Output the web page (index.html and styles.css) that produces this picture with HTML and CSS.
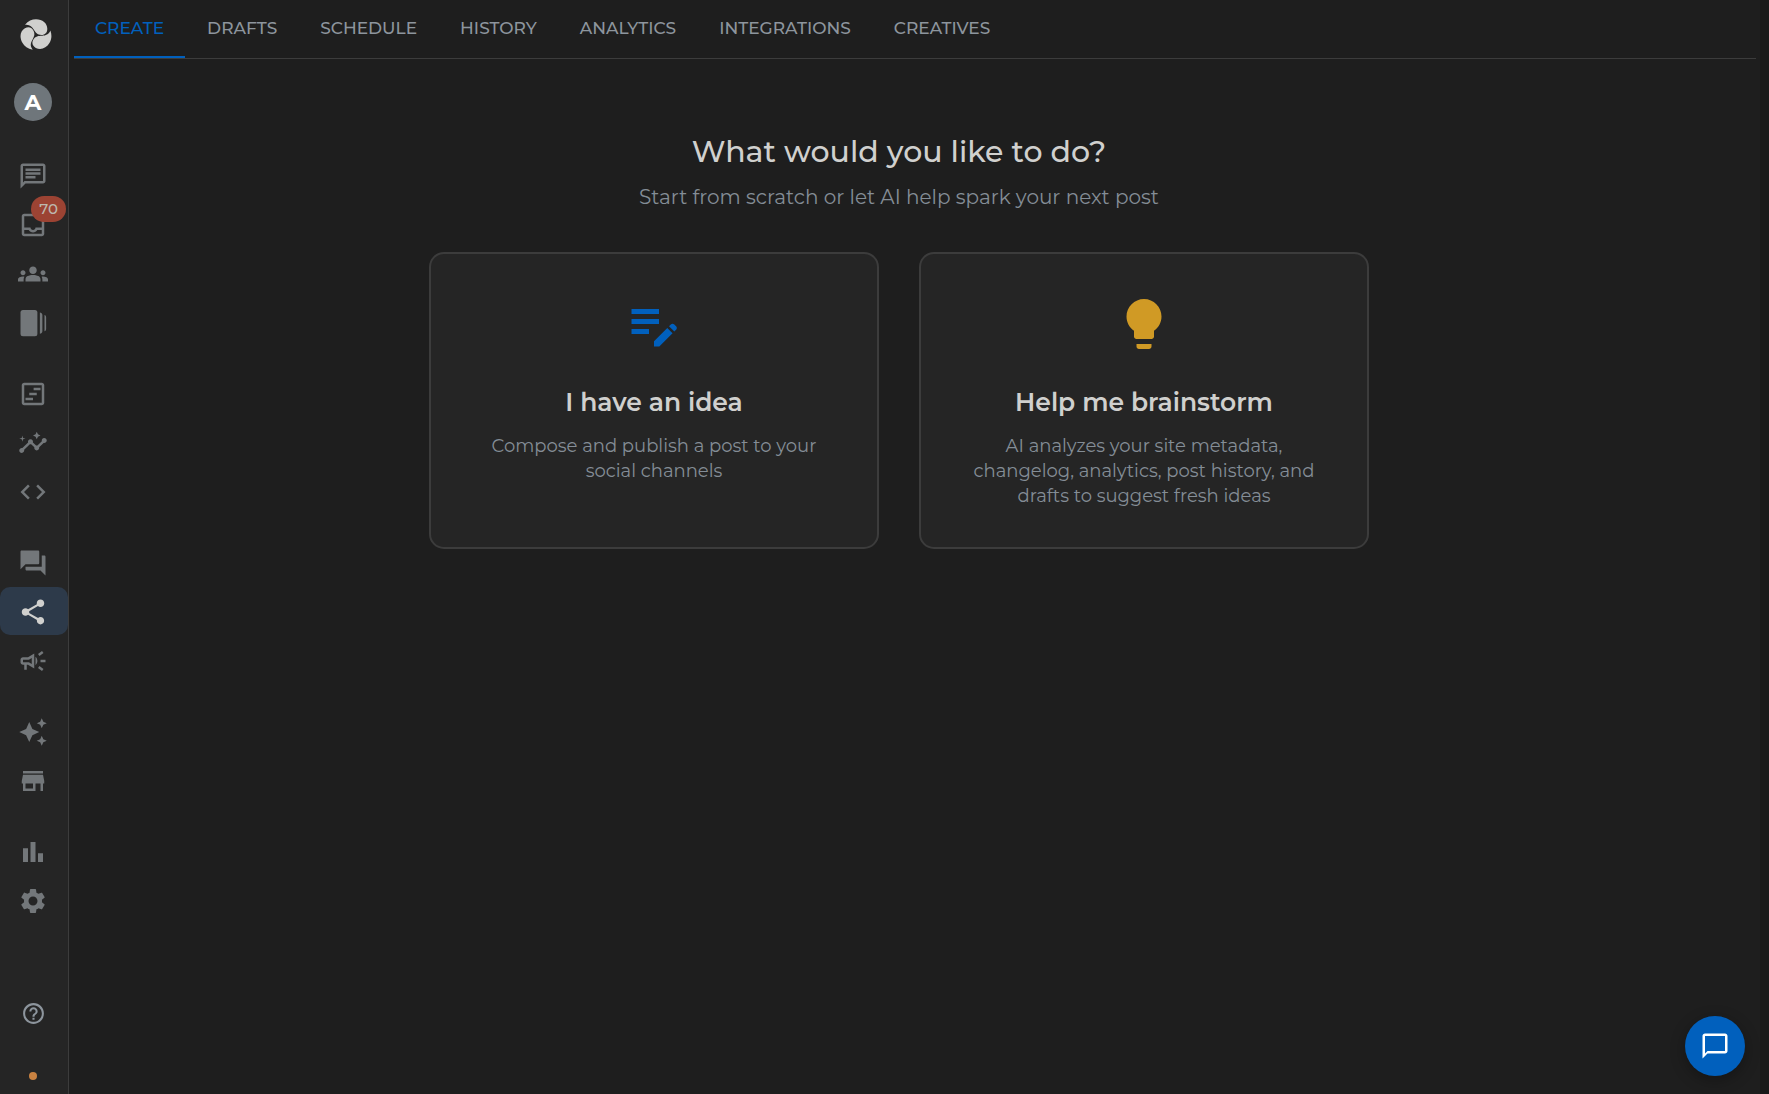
FILE: index.html
```html
<!DOCTYPE html>
<html lang="en">
<head>
    <meta charset="UTF-8">
    <meta name="viewport" content="width=device-width, initial-scale=1.0">
    <title>Create</title>
    <link rel="stylesheet" href="styles.css">
</head>
<body>
    <aside class="sidebar">
        <a href="#" class="logo" aria-label="Home">
            <svg viewBox="0 0 32 32">
                <path d="M5 5.8C8 2 12 .3 16 .3c6.500 0 11.300 4 11.300 9.400 0 3.900-2.300 6.300-5.800 6.300-4.300 0-6-2.500-7.800-5.400C12 7.500 9.500 5 5 5.800z"/>
                <path transform="rotate(120 16 16)" d="M5 5.8C8 2 12 .3 16 .3c6.500 0 11.300 4 11.300 9.400 0 3.900-2.300 6.300-5.800 6.300-4.300 0-6-2.500-7.800-5.400C12 7.500 9.500 5 5 5.800z"/>
                <path transform="rotate(240 16 16)" d="M5 5.8C8 2 12 .3 16 .3c6.500 0 11.300 4 11.300 9.400 0 3.900-2.300 6.300-5.800 6.300-4.300 0-6-2.500-7.800-5.400C12 7.500 9.500 5 5 5.800z"/>
            </svg>
        </a>
        <button class="avatar">A</button>

        <nav class="side-nav">
            <div class="side-group">
                <a href="#" class="side-item" aria-label="Chat">
                    <svg viewBox="0 0 24 24"><path d="M4 4h16v12H5.170L4 17.170V4m0-2c-1.100 0-1.990.9-1.990 2L2 22l4-4h14c1.100 0 2-.9 2-2V4c0-1.100-.9-2-2-2H4zm2 10h8v2H6v-2zm0-3h12v2H6V9zm0-3h12v2H6V6z"/></svg>
                </a>
                <a href="#" class="side-item" aria-label="Inbox">
                    <svg viewBox="0 0 24 24"><path d="M19 3H5c-1.100 0-2 .9-2 2v14c0 1.100.9 2 2 2h14c1.100 0 2-.9 2-2V5c0-1.100-.9-2-2-2zm0 16H5v-3h3.560c.69 1.190 1.970 2 3.450 2s2.750-.81 3.450-2H19v3zm0-5h-4.990c0 1.100-.9 2-2 2s-2-.9-2-2H5V5h14v9z"/></svg>
                    <span class="badge">70</span>
                </a>
                <a href="#" class="side-item" aria-label="Contacts">
                    <svg viewBox="0 0 24 24"><path d="M12 12.750c1.630 0 3.070.39 4.240.9 1.080.48 1.760 1.560 1.760 2.730V18H6v-1.610c0-1.180.68-2.260 1.760-2.730 1.170-.52 2.610-.91 4.240-.91zM4 13c1.100 0 2-.9 2-2s-.9-2-2-2-2 .9-2 2 .9 2 2 2zm1.130 1.100c-.37-.06-.74-.1-1.130-.1-.99 0-1.930.21-2.780.58C.48 14.900 0 15.620 0 16.430V18h4.500v-1.610c0-.83.23-1.610.63-2.290zM20 13c1.100 0 2-.9 2-2s-.9-2-2-2-2 .9-2 2 .9 2 2 2zm4 3.430c0-.81-.48-1.530-1.220-1.850-.85-.37-1.790-.58-2.780-.58-.39 0-.76.04-1.130.1.4.68.63 1.460.63 2.290V18H24v-1.570zM12 6c1.660 0 3 1.340 3 3s-1.340 3-3 3-3-1.340-3-3 1.340-3 3-3z"/></svg>
                </a>
                <a href="#" class="side-item" aria-label="Stories">
                    <svg viewBox="0 0 24 24"><rect x="2" y="1.500" width="13.500" height="21" rx="2"/><path d="M17.500 3.500c1.100.2 2 .9 2 2v13c0 1.100-.9 1.800-2 2zM21.200 5.500c.8.300 1.300.9 1.300 1.800v9.400c0 .9-.5 1.500-1.300 1.800z"/></svg>
                </a>
            </div>
            <div class="side-group">
                <a href="#" class="side-item" aria-label="Changelog">
                    <svg viewBox="0 0 24 24"><path fill-rule="evenodd" d="M5 3h14c1.100 0 2 .9 2 2v14c0 1.100-.9 2-2 2H5c-1.100 0-2-.9-2-2V5c0-1.100.9-2 2-2zm0 2v14h14V5zm7.500 2h5.500v2h-5.500zM9 11h6v2H9zm-3 4h6v2H6z"/></svg>
                </a>
                <a href="#" class="side-item" aria-label="Insights">
                    <svg viewBox="0 0 24 24"><path d="M21 8c-1.450 0-2.260 1.440-1.930 2.510l-3.550 3.560c-.3-.09-.74-.09-1.040 0l-2.550-2.550C12.270 10.450 11.460 9 10 9c-1.450 0-2.270 1.440-1.930 2.520l-4.560 4.550C2.440 15.740 1 16.550 1 18c0 1.100.9 2 2 2 1.450 0 2.260-1.440 1.930-2.510l4.550-4.560c.3.09.74.09 1.040 0l2.550 2.550C12.730 16.550 13.540 18 15 18c1.450 0 2.270-1.440 1.930-2.520l3.560-3.550c1.070.33 2.510-.48 2.510-1.930 0-1.100-.9-2-2-2zM15 9l.94-2.070L18 6l-2.060-.93L15 3l-.92 2.070L12 6l2.080.93zM3.500 11L4 9l2-.5L4 8l-.5-2L3 8l-2 .5L3 9z"/></svg>
                </a>
                <a href="#" class="side-item" aria-label="Code">
                    <svg viewBox="0 0 24 24"><path d="M9.400 16.600L4.800 12l4.600-4.600L8 6l-6 6 6 6 1.400-1.400zm5.200 0l4.600-4.600-4.600-4.600L16 6l6 6-6 6-1.400-1.400z"/></svg>
                </a>
            </div>
            <div class="side-group">
                <a href="#" class="side-item" aria-label="Forum">
                    <svg viewBox="0 0 24 24"><path d="M21 6h-2v9H6v2c0 .55.45 1 1 1h11l4 4V7c0-.55-.45-1-1-1zm-4 6V3c0-.55-.45-1-1-1H3c-.55 0-1 .45-1 1v14l4-4h10c.55 0 1-.45 1-1z"/></svg>
                </a>
                <a href="#" class="side-item active" aria-label="Social">
                    <svg viewBox="0 0 24 24"><path d="M18 16.080c-.76 0-1.440.3-1.960.77L8.910 12.700c.05-.23.09-.46.09-.7s-.04-.47-.09-.7l7.050-4.110c.54.5 1.250.81 2.040.81 1.660 0 3-1.340 3-3s-1.340-3-3-3-3 1.340-3 3c0 .24.04.47.09.7L8.040 9.810C7.500 9.310 6.790 9 6 9c-1.660 0-3 1.340-3 3s1.340 3 3 3c.79 0 1.500-.31 2.040-.81l7.120 4.160c-.05.21-.08.43-.08.65 0 1.610 1.310 2.920 2.920 2.920s2.920-1.310 2.920-2.920-1.310-2.920-2.920-2.920z"/></svg>
                </a>
                <a href="#" class="side-item" aria-label="Campaigns">
                    <svg viewBox="0 0 24 24"><path d="M18 11v2h4v-2h-4zM16 17.610c.96.71 2.210 1.650 3.200 2.390.4-.53.8-1.070 1.200-1.600-.99-.74-2.240-1.680-3.200-2.400-.4.54-.8 1.080-1.200 1.610zM20.400 5.600C20 5.070 19.600 4.530 19.200 4c-.99.74-2.240 1.680-3.200 2.400.4.53.8 1.070 1.200 1.600.96-.72 2.210-1.650 3.200-2.400zM4 9c-1.100 0-2 .9-2 2v2c0 1.100.9 2 2 2h1v4h2v-4h1l5 3V6L8 9H4zm5.030 1.710L11 9.530v4.940l-1.970-1.180-.48-.29H4v-2h4.550l.48-.29zM15.500 12c0-1.330-.58-2.530-1.500-3.350v6.690c.92-.81 1.500-2.010 1.500-3.340z"/></svg>
                </a>
            </div>
            <div class="side-group">
                <a href="#" class="side-item" aria-label="AI">
                    <svg viewBox="0 0 24 24"><path d="M19 9l1.250-2.750L23 5l-2.750-1.250L19 1l-1.250 2.750L15 5l2.750 1.250L19 9zm-7.500.5L9 4 6.500 9.500 1 12l5.500 2.500L9 20l2.500-5.500L17 12l-5.500-2.500zM19 15l-1.250 2.750L15 19l2.750 1.250L19 23l1.250-2.750L23 19l-2.750-1.250L19 15z"/></svg>
                </a>
                <a href="#" class="side-item" aria-label="Store">
                    <svg viewBox="0 0 24 24"><path d="M20 4H4v2h16V4zm1 10v-2l-1-5H4l-1 5v2h1v6h10v-6h4v6h2v-6h1zm-9 4H6v-4h6v4z"/></svg>
                </a>
            </div>
            <div class="side-group">
                <a href="#" class="side-item" aria-label="Reports">
                    <svg viewBox="0 0 24 24"><path d="M4 9h4v11H4zm12 4h4v7h-4zm-6-9h4v16h-4z"/></svg>
                </a>
                <a href="#" class="side-item" aria-label="Settings">
                    <svg viewBox="0 0 24 24"><path d="M19.140 12.940c.04-.3.06-.61.06-.94 0-.32-.02-.64-.07-.94l2.030-1.580c.18-.14.23-.41.12-.61l-1.920-3.320c-.12-.22-.37-.29-.59-.22l-2.390.96c-.5-.38-1.030-.7-1.620-.94l-.36-2.540c-.04-.24-.24-.41-.48-.41h-3.840c-.24 0-.43.17-.47.41l-.36 2.540c-.59.24-1.130.57-1.620.94l-2.390-.96c-.22-.08-.47 0-.59.22L2.740 8.870c-.12.21-.08.47.12.61l2.030 1.580c-.05.3-.09.63-.09.94s.02.64.07.94l-2.030 1.580c-.18.14-.23.41-.12.61l1.920 3.320c.12.22.37.29.59.22l2.390-.96c.5.38 1.030.7 1.620.94l.36 2.540c.05.24.24.41.48.41h3.840c.24 0 .44-.17.47-.41l.36-2.540c.59-.24 1.130-.56 1.620-.94l2.390.96c.22.08.47 0 .59-.22l1.920-3.320c.12-.22.07-.47-.12-.61l-2.010-1.580zM12 15.600c-1.980 0-3.600-1.620-3.600-3.600s1.620-3.600 3.600-3.600 3.600 1.620 3.600 3.600-1.620 3.600-3.600 3.600z"/></svg>
                </a>
            </div>
        </nav>

        <div class="side-footer">
            <a href="#" class="side-item help" aria-label="Help">
                <svg viewBox="0 0 24 24"><path d="M11 18h2v-2h-2v2zm1-16C6.480 2 2 6.480 2 12s4.480 10 10 10 10-4.480 10-10S17.520 2 12 2zm0 18c-4.410 0-8-3.590-8-8s3.590-8 8-8 8 3.590 8 8-3.590 8-8 8zm0-14c-2.210 0-4 1.790-4 4h2c0-1.100.9-2 2-2s2 .9 2 2c0 2-3 1.750-3 5h2c0-2.250 3-2.500 3-5 0-2.210-1.790-4-4-4z"/></svg>
            </a>
            <span class="status-dot"></span>
        </div>
    </aside>

    <main class="main">
        <nav class="tabs">
            <a href="#" class="tab active">CREATE</a>
            <a href="#" class="tab">DRAFTS</a>
            <a href="#" class="tab">SCHEDULE</a>
            <a href="#" class="tab">HISTORY</a>
            <a href="#" class="tab">ANALYTICS</a>
            <a href="#" class="tab">INTEGRATIONS</a>
            <a href="#" class="tab">CREATIVES</a>
        </nav>

        <section class="content">
            <h1>What would you like to do?</h1>
            <p class="subtitle">Start from scratch or let AI help spark your next post</p>

            <div class="cards">
                <button class="card">
                    <svg class="card-icon blue" viewBox="0 0 24 24"><path d="M3 10h11v2H3v-2zm0-2h11V6H3v2zm0 8h7v-2H3v2zm15.010-3.130l.71-.71c.39-.39 1.020-.39 1.410 0l.71.71c.39.39.39 1.020 0 1.410l-.71.71-2.120-2.120zm-.71.71l-5.300 5.300V21h2.120l5.300-5.300-2.120-2.120z"/></svg>
                    <span class="card-title">I have an idea</span>
                    <span class="card-text">Compose and publish a post to your social channels</span>
                </button>
                <button class="card">
                    <svg class="card-icon amber" viewBox="0 0 24 24"><path d="M9 21c0 .55.45 1 1 1h4c.55 0 1-.45 1-1v-1H9v1zm3-19C8.140 2 5 5.140 5 9c0 2.380 1.190 4.470 3 5.740V17c0 .55.45 1 1 1h6c.55 0 1-.45 1-1v-2.260c1.810-1.270 3-3.360 3-5.740 0-3.860-3.140-7-7-7z"/></svg>
                    <span class="card-title">Help me brainstorm</span>
                    <span class="card-text">AI analyzes your site metadata, changelog, analytics, post history, and drafts to suggest fresh ideas</span>
                </button>
            </div>
        </section>
    </main>

    <button class="chat-btn" aria-label="Open chat">
        <svg viewBox="0 0 24 24"><path d="M20 2H4c-1.100 0-2 .9-2 2v18l4-4h14c1.100 0 2-.9 2-2V4c0-1.100-.9-2-2-2zm0 14H6l-2 2V4h16v12z"/></svg>
    </button>
</body>
</html>
```
FILE: styles.css
```css
* {
    box-sizing: border-box;
}
body {
    margin: 0;
    display: flex;
    min-height: 100vh;
    background-color: #191919;
    color: #d0d0ce;
    font-family: 'Montserrat', 'Inter', sans-serif;
}
a {
    color: inherit;
    text-decoration: none;
}
button {
    font-family: inherit;
    color: inherit;
    border: none;
    cursor: pointer;
}
svg {
    display: block;
    fill: currentColor;
}

/* Sidebar */
.sidebar {
    width: 69px;
    flex-shrink: 0;
    display: flex;
    flex-direction: column;
    align-items: center;
    padding-top: 19px;
    background-color: #252525;
    border-right: 1px solid #3c3c3c;
    color: #73777a;
}
.logo {
    padding-left: 3px;
    color: #d0d0ce;
}
.logo svg {
    width: 32px;
    height: 32px;
}
.avatar {
    width: 38px;
    height: 38px;
    margin: 32px 2px 0 0;
    padding: 0;
    border-radius: 50%;
    background-color: #6f767b;
    color: #fff;
    font-size: 22px;
    font-weight: 700;
}
.side-nav {
    width: 100%;
    margin-top: 30px;
    display: flex;
    flex-direction: column;
    gap: 23px;
}
.side-group {
    display: flex;
    flex-direction: column;
    gap: 1px;
}
.side-item {
    position: relative;
    width: 100%;
    height: 48px;
    padding: 2px 2px 0 0;
    display: flex;
    align-items: center;
    justify-content: center;
    border-radius: 10px;
}
.side-item svg {
    width: 30px;
    height: 30px;
}
.side-item.active {
    background-color: #2d3a4a;
    color: #d0d0ce;
}
.badge {
    position: absolute;
    top: -4px;
    right: 2px;
    padding: 0 8px;
    border-radius: 13px;
    background-color: #9c4333;
    color: #bdb8ae;
    font-size: 15px;
    font-weight: 500;
    line-height: 26px;
}
.side-footer {
    width: 100%;
    margin-top: auto;
    padding-bottom: 14px;
    display: flex;
    flex-direction: column;
    align-items: center;
    gap: 36px;
}
.side-item.help {
    color: #8d959d;
}
.side-item.help svg {
    width: 25px;
    height: 25px;
}
.status-dot {
    width: 8px;
    height: 8px;
    margin-right: 2px;
    border-radius: 50%;
    background-color: #c98241;
}

/* Main */
.main {
    flex: 1;
    margin-right: 9px;
    padding: 0 4px 0 5px;
    background-color: #1e1e1e;
}
.tabs {
    display: flex;
    gap: 1px;
    border-bottom: 1px solid #3c3c3c;
}
.tab {
    padding: 0 21px;
    border-bottom: 2px solid transparent;
    color: #8d959d;
    font-size: 17px;
    font-weight: 500;
    line-height: 56px;
}
.tab.active {
    border-bottom-color: #0160bd;
    color: #0160bd;
}
.content {
    padding: 73px 32px 0 0;
    text-align: center;
}
h1 {
    margin: 0;
    font-size: 30px;
    font-weight: 500;
    line-height: 40px;
}
.subtitle {
    margin: 10px 0 40px;
    color: #848d96;
    font-size: 20px;
    line-height: 30px;
}
.cards {
    max-width: 940px;
    margin: 0 auto;
    display: grid;
    grid-template-columns: repeat(2, 1fr);
    gap: 40px;
}
.card {
    display: flex;
    flex-direction: column;
    align-items: center;
    padding: 40px 40px 38px;
    background-color: #252525;
    border: 2px solid #3c3c3c;
    border-radius: 15px;
}
.card-icon {
    width: 60px;
    height: 60px;
}
.card-icon.blue {
    color: #0160bd;
}
.card-icon.amber {
    color: #d09a25;
}
.card-title {
    margin: 30px 0 14px;
    font-size: 25px;
    font-weight: 600;
    line-height: 36px;
}
.card-text {
    color: #848d96;
    font-size: 18px;
    line-height: 25px;
}

/* Chat button */
.chat-btn {
    position: fixed;
    right: 24px;
    bottom: 18px;
    width: 60px;
    height: 60px;
    padding: 15px;
    border-radius: 50%;
    background-color: #0160bd;
    color: #fff;
    box-shadow: 0 4px 15px rgba(0, 0, 0, 0.3);
}
.chat-btn svg {
    width: 30px;
    height: 30px;
}
```
